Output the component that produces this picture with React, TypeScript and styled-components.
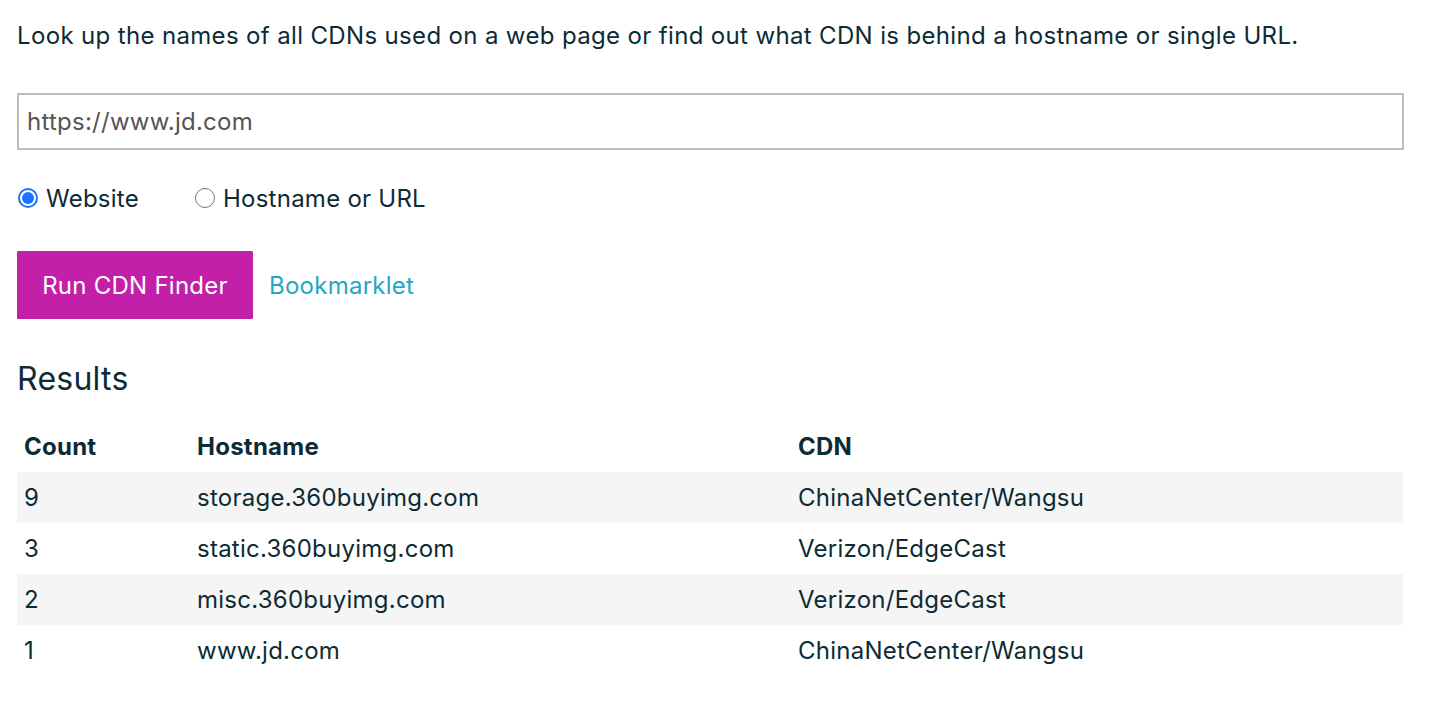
import styled, { createGlobalStyle } from "styled-components";

const GlobalStyle = createGlobalStyle`
  html, body {
    margin: 0;
    padding: 0;
    background: #ffffff;
  }
  body {
    font-family: Inter, "Noto Sans", sans-serif;
    color: #0d2b34;
    letter-spacing: 0.25px;
  }
`;

const Page = styled.main`
  width: 1387px;
  padding: 18px 0 0 17px;
`;

const Intro = styled.p`
  margin: 0 0 39px;
  font-size: 24px;
  line-height: 36px;
  letter-spacing: 0.35px;
`;

const UrlInput = styled.input`
  display: block;
  box-sizing: border-box;
  width: 1387px;
  height: 57px;
  margin: 0;
  padding: 0 8px;
  border: 2px solid #bcbcbc;
  border-radius: 0;
  font-family: Inter, "Noto Sans", sans-serif;
  font-size: 24px;
  letter-spacing: 0.25px;
  color: #555555;
  outline: none;
`;

const RadioRow = styled.div`
  display: flex;
  align-items: center;
  margin-top: 33px;
  height: 30px;
`;

const RadioLabel = styled.label<{ $gap: number }>`
  display: flex;
  align-items: center;
  gap: 8px;
  margin-right: ${({ $gap }) => $gap}px;
  font-size: 24px;
  cursor: pointer;
`;

const Radio = styled.input.attrs({ type: "radio" })`
  appearance: none;
  box-sizing: border-box;
  width: 20px;
  height: 20px;
  margin: 0 0 0 1px;
  border-radius: 50%;
  border: 1.5px solid #767676;
  background: #fff;
  display: grid;
  place-content: center;

  &:checked {
    border: 2px solid #1a73ff;
  }
  &:checked::before {
    content: "";
    width: 12px;
    height: 12px;
    border-radius: 50%;
    background: #1a73ff;
  }
`;

const Actions = styled.div`
  display: flex;
  align-items: center;
  gap: 16px;
  margin-top: 38px;
`;

const RunButton = styled.button`
  width: 236px;
  height: 68px;
  padding: 0;
  border: none;
  border-radius: 1px;
  background: #c220a8;
  color: #ffffff;
  font-family: Inter, "Noto Sans", sans-serif;
  font-size: 24px;
  letter-spacing: 0.25px;
  cursor: pointer;
`;

const Bookmarklet = styled.a`
  color: #23a7c4;
  font-size: 24px;
  text-decoration: none;
`;

const Heading = styled.h2`
  margin: 40px 0 0;
  font-size: 32px;
  font-weight: 400;
  line-height: 40px;
`;

const Table = styled.table`
  width: 1386px;
  margin-top: 21px;
  border-collapse: collapse;
  table-layout: fixed;
  font-size: 24px;
`;

const Th = styled.th<{ $width: number }>`
  box-sizing: border-box;
  width: ${({ $width }) => $width}px;
  height: 52px;
  padding: 0 7px;
  text-align: left;
  font-weight: 700;
  vertical-align: middle;
`;

const Row = styled.tr`
  height: 51px;
  &:nth-child(odd) {
    background: #f5f5f5;
  }
`;

const Td = styled.td`
  padding: 0 7px;
`;

const results = [
  { count: 9, host: "storage.360buyimg.com", cdn: "ChinaNetCenter/Wangsu" },
  { count: 3, host: "static.360buyimg.com", cdn: "Verizon/EdgeCast" },
  { count: 2, host: "misc.360buyimg.com", cdn: "Verizon/EdgeCast" },
  { count: 1, host: "www.jd.com", cdn: "ChinaNetCenter/Wangsu" },
];

export default function App() {
  return (
    <>
      <GlobalStyle />
      <Page>
        <Intro>
          Look up the names of all CDNs used on a web page or find out what CDN is behind a hostname or single URL.
        </Intro>
        <UrlInput defaultValue="https://www.jd.com" />
        <RadioRow>
          <RadioLabel $gap={55}>
            <Radio name="mode" defaultChecked />
            Website
          </RadioLabel>
          <RadioLabel $gap={0}>
            <Radio name="mode" />
            Hostname or URL
          </RadioLabel>
        </RadioRow>
        <Actions>
          <RunButton>Run CDN Finder</RunButton>
          <Bookmarklet href="#">Bookmarklet</Bookmarklet>
        </Actions>
        <Heading>Results</Heading>
        <Table>
          <thead>
            <tr>
              <Th $width={173}>Count</Th>
              <Th $width={601}>Hostname</Th>
              <Th $width={612}>CDN</Th>
            </tr>
          </thead>
          <tbody>
            {results.map((r) => (
              <Row key={r.host}>
                <Td>{r.count}</Td>
                <Td>{r.host}</Td>
                <Td>{r.cdn}</Td>
              </Row>
            ))}
          </tbody>
        </Table>
      </Page>
    </>
  );
}
